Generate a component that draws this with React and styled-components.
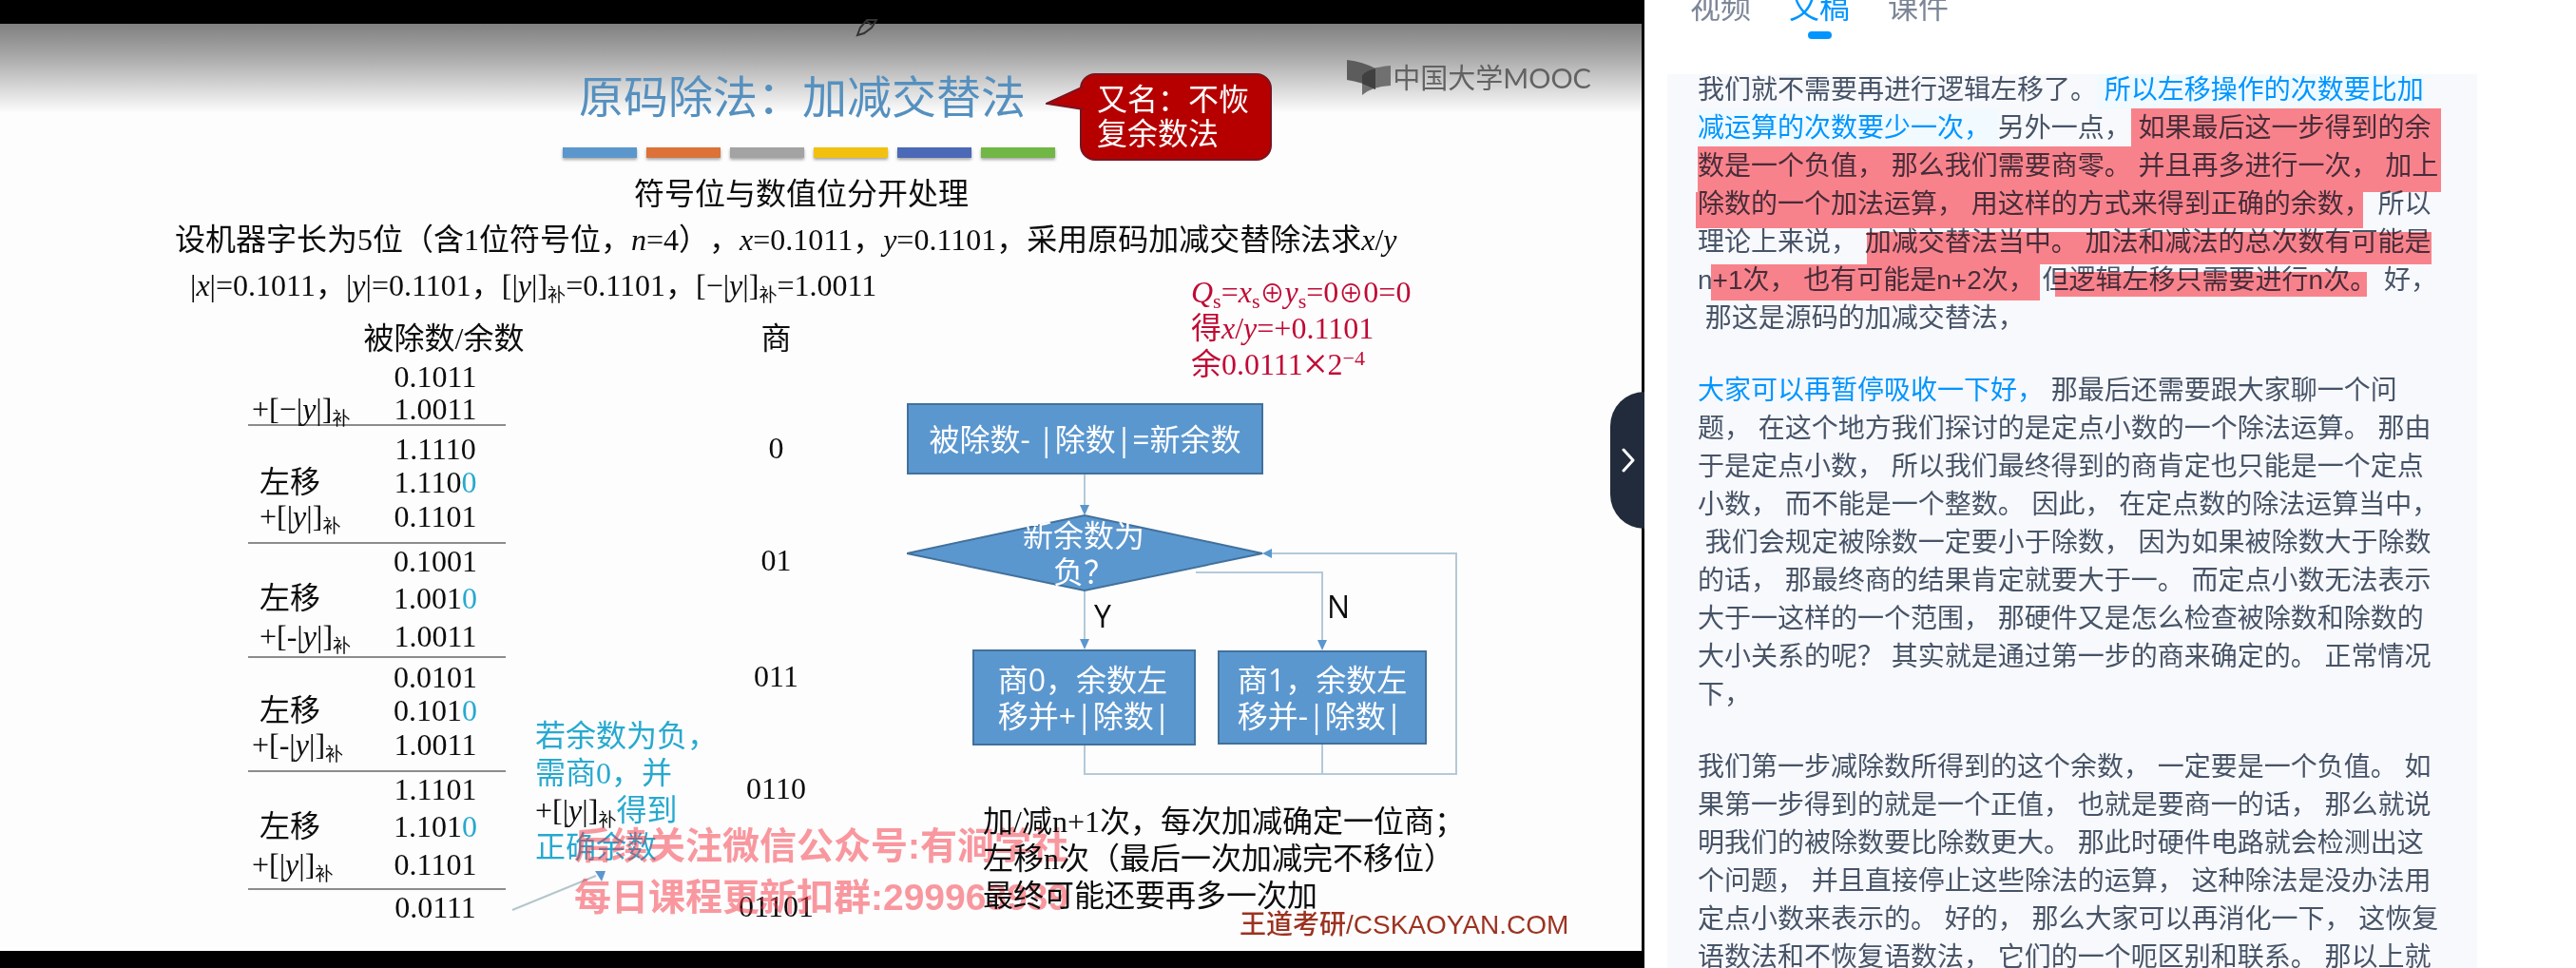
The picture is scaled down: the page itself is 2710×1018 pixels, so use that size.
import React from "react";
import styled, { createGlobalStyle } from "styled-components";

const serif = `"Liberation Serif", "Noto Sans CJK SC", serif`;
const sans = `"Liberation Sans", "Noto Sans CJK SC", sans-serif`;
const humanist = `"Open Sans", "Noto Sans CJK SC", sans-serif`;

const GlobalStyle = createGlobalStyle`
  *, *::before, *::after { box-sizing: border-box; }
  body { margin: 0; background: #fff; overflow: hidden; text-spacing-trim: space-all; }
  p, h1, h2 { margin: 0; font-weight: inherit; font-size: inherit; }
`;

const Page = styled.div`
  display: grid;
  grid-template-columns: minmax(0, 1fr) 980px;
  height: 100vh;
  overflow: hidden;
  font-family: ${sans};
`;

/* ---------- video ---------- */

const Video = styled.main`
  position: relative;
  display: flex;
  min-width: 0;
  padding: 25px 3px 18px 0;
  background: #000;
`;

const Slide = styled.section`
  position: relative;
  flex: 1;
  min-width: 0;
  padding-top: 38px;
  overflow: hidden;
  color: #0c0c0c;
  background: linear-gradient(#808080 0, #a8a8a8 34px, #d0d0d0 62px, #fdfdfd 94px);
  font-family: ${serif};
  font-size: 32px;
  font-weight: 400;
  white-space: nowrap;
`;

const SlideHeader = styled.header`
  display: flex;
  align-items: flex-start;
  gap: 26px;
  padding: 0 53px 0 592px;
`;

const TitleBlock = styled.div`
  margin-top: 16px;
`;

const Title = styled.h1`
  padding-left: 17px;
  color: #5590bf;
  font-size: 47px;
  line-height: 48px;
`;

const Bars = styled.div`
  display: flex;
  gap: 10px;
  margin-top: 28px;
`;

const Bar = styled.span`
  width: 78px;
  height: 11px;
  background: ${(p) => p.$color};
  box-shadow: 0 2px 3px rgba(0, 0, 0, 0.35);
`;

const Callout = styled.aside`
  position: relative;
  width: 202px;
  margin-top: 14px;
  padding: 8px 16px;
  border: 2px solid #7a1420;
  border-radius: 16px;
  background: #b60000;
  color: #fff;
  line-height: 36px;
`;

const CalloutTip = styled.svg`
  position: absolute;
  left: -38px;
  top: 12px;
`;

const Logo = styled.div`
  display: flex;
  align-items: center;
  gap: 2px;
  margin-left: auto;
  color: #626262;
  font-family: Lato, "Noto Sans CJK SC", sans-serif;
  font-size: 29px;
  line-height: 38px;
`;

const Intro = styled.div`
  padding-top: 11px;
  line-height: 48px;
`;

const IntroLine = styled.p`
  padding-left: ${(p) => p.$indent}px;
  line-height: 48px;
`;

const Body = styled.div`
  display: grid;
  grid-template-columns: 954px minmax(0, 1fr);
`;

const Steps = styled.table`
  margin-left: 261px;
  border-collapse: collapse;
  table-layout: fixed;
  width: 640px;
  line-height: 30px;
`;

const Row = styled.tr`
  & > * {
    height: ${(p) => p.$height + (p.$top || 0) + (p.$bottom || 0)}px;
    padding: ${(p) => p.$top || 0}px 0 ${(p) => (p.$tight ? 0 : (p.$bottom || 0) + 4)}px;
    font-weight: 400;
    vertical-align: middle;
  }
  & > :nth-child(-n + 2) {
    border-bottom: ${(p) => (p.$rule ? "2px solid #8c8c8c" : "0")};
  }
`;

const HeadLabel = styled.span`
  display: flex;
  justify-content: center;
  margin: 0 -20px 0 -6px;
`;

const Op = styled.td`
  text-align: left;
  & > span {
    padding-left: ${(p) => (p.$near ? 4 : 12)}px;
  }
`;

const Value = styled.td`
  text-align: center;
  & > span {
    padding-right: 4px;
  }
`;

const Cyan = styled.span`
  color: #27a9cf;
`;

const Sub = styled.sub`
  font-size: ${(p) => (p.$letter ? 22 : 19)}px;
  line-height: 0;
  vertical-align: -6px;
`;

const Sup = styled.sup`
  font-size: 22px;
  line-height: 0;
  vertical-align: 10px;
`;

const Big = styled.span`
  font-size: 46px;
  line-height: 0;
  vertical-align: -4px;
`;

const Ring = styled.span`
  font-size: 26px;
  line-height: 0;
`;

const Results = styled.div`
  padding: 12px 0 0 299px;
  color: #c00a35;
  line-height: 38px;
`;

const Chart = styled.div`
  position: relative;
  height: 392px;
  margin-top: 22px;
  font-family: ${humanist};
`;

const Wires = styled.svg`
  position: absolute;
  inset: 0;
`;

const Node = styled.div`
  position: absolute;
  left: ${(p) => p.$x}px;
  top: ${(p) => p.$y}px;
  width: ${(p) => p.$w}px;
  height: ${(p) => p.$h}px;
  display: flex;
  align-items: center;
  justify-content: center;
  border: ${(p) => (p.$plain ? "0" : "2px solid #41719c")};
  background: ${(p) => (p.$plain ? "none" : "#5b97cf")};
  color: ${(p) => (p.$dark ? "#0c0c0c" : "#fff")};
  line-height: 38px;
`;

const Centered = styled.span`
  text-align: center;
`;

const Conclusions = styled.div`
  position: relative;
  z-index: 2;
  padding: 29px 0 0 80px;
  line-height: 39px;
`;

const Credit = styled.p`
  padding-left: 350px;
  color: #9c3220;
  font-family: ${sans};
  font-size: 28px;
  font-weight: 500;
  line-height: 22px;
`;

const Note = styled.aside`
  position: absolute;
  left: 563px;
  top: 730px;
  color: #27a9cf;
  line-height: 39px;
`;

const Ink = styled.span`
  color: #0c0c0c;
`;

const Watermark = styled.p`
  position: absolute;
  left: 604px;
  top: 838px;
  color: rgba(245, 50, 65, 0.5);
  font-family: ${sans};
  font-size: 39px;
  font-weight: 700;
  line-height: 54px;
`;

const Pointer = styled.svg`
  position: absolute;
  left: 537px;
  top: 886px;
`;

const Pencil = styled.svg`
  position: absolute;
  left: 900px;
  top: 20px;
`;

const Collapse = styled.button`
  position: absolute;
  right: 0;
  top: 412px;
  width: 36px;
  height: 144px;
  padding: 0 10px 0 12px;
  border: 0;
  border-radius: 36px 0 0 36px;
  background: #222b3b;
  line-height: 0;
`;

/* ---------- transcript ---------- */

const Side = styled.aside`
  display: flex;
  flex-direction: column;
  min-height: 0;
  padding: 0 104px 0 24px;
  background: #fff;
`;

const Tabs = styled.nav`
  display: flex;
  gap: 40px;
  flex: none;
  height: 90px;
  margin-top: -12px;
  padding-left: 24px;
`;

const Tab = styled.button`
  display: flex;
  flex-direction: column;
  align-items: center;
  gap: 5px;
  padding: 0;
  border: 0;
  background: none;
  color: ${(p) => (p.$active ? "#0095ff" : "#7d8698")};
  font: 32px / 40px ${sans};
  &::after {
    content: "";
    width: 25px;
    height: 8px;
    border-radius: 4px;
    background: ${(p) => (p.$active ? "#0095ff" : "transparent")};
  }
`;

const Panel = styled.article`
  position: relative;
  flex: 1;
  min-height: 0;
  overflow: hidden;
  padding: 0 32px;
  background: #f8f9fd;
`;

const Script = styled.div`
  display: flex;
  flex-direction: column;
  gap: 36px;
  margin-top: -3px;
  color: #475467;
  font-size: 28px;
  line-height: 40px;
`;

const Para = styled.p`
  white-space: pre;
`;

const Spoken = styled.span`
  padding: 4px 0;
  color: #0095ff;
  background: ${(p) => (p.$lit ? "#f0faff" : "none")};
`;

const Mark = styled.span`
  position: absolute;
  left: ${(p) => p.$x}px;
  top: ${(p) => p.$y}px;
  width: ${(p) => p.$w}px;
  height: ${(p) => p.$h}px;
  background: #ff858c;
  mix-blend-mode: multiply;
`;

const barColors = ["#5b97cc", "#dc7238", "#a3a3a3", "#f2c10f", "#4b69b7", "#71b745"];

const y = <i>y</i>;
const compl = <Sub>补</Sub>;
const shift = "左移";
const plusY = <>+[|{y}|]{compl}</>;
const minusY = <>+[-|{y}|]{compl}</>;

const steps = [
  { value: "0.1011", height: 34, tight: true },
  { op: <>+[−|{y}|]{compl}</>, near: true, value: "1.0011", height: 34, tight: true, rule: true },
  { value: "1.1110", quotient: "0", height: 36, top: 8 },
  { op: shift, value: "1.110", added: "0", height: 36 },
  { op: plusY, value: "0.1101", height: 36, bottom: 8, rule: true },
  { value: "0.1001", quotient: "01", height: 40 },
  { op: shift, value: "1.001", added: "0", height: 40 },
  { op: minusY, value: "1.0011", height: 40, rule: true },
  { value: "0.0101", quotient: "011", height: 36, top: 4 },
  { op: shift, value: "0.101", added: "0", height: 36 },
  { op: minusY, near: true, value: "1.0011", height: 36, bottom: 8, rule: true },
  { value: "1.1101", quotient: "0110", height: 40 },
  { op: shift, value: "1.101", added: "0", height: 40 },
  { op: plusY, near: true, value: "0.1101", height: 40, bottom: 4, rule: true },
  { value: "0.0111", quotient: "01101", height: 40 },
];

const marks = [
  [488, 36, 326, 40],
  [32, 76, 782, 48],
  [30, 124, 702, 38],
  [210, 166, 594, 34],
  [46, 200, 346, 38],
  [408, 208, 328, 26],
];

const paraOne = [
  "另外一点， 如果最后这一步得到的余",
  "数是一个负值， 那么我们需要商零。 并且再多进行一次， 加上",
  "除数的一个加法运算， 用这样的方式来得到正确的余数， 所以",
  "理论上来说， 加减交替法当中。 加法和减法的总次数有可能是",
  "n+1次， 也有可能是n+2次， 但逻辑左移只需要进行n次。 好，",
  " 那这是源码的加减交替法，",
].join("\n");

const paraTwo = [
  " 那最后还需要跟大家聊一个问",
  "题， 在这个地方我们探讨的是定点小数的一个除法运算。 那由",
  "于是定点小数， 所以我们最终得到的商肯定也只能是一个定点",
  "小数， 而不能是一个整数。 因此， 在定点数的除法运算当中，",
  " 我们会规定被除数一定要小于除数， 因为如果被除数大于除数",
  "的话， 那最终商的结果肯定就要大于一。 而定点小数无法表示",
  "大于一这样的一个范围， 那硬件又是怎么检查被除数和除数的",
  "大小关系的呢？ 其实就是通过第一步的商来确定的。 正常情况",
  "下，",
].join("\n");

const paraThree = [
  "我们第一步减除数所得到的这个余数， 一定要是一个负值。 如",
  "果第一步得到的就是一个正值， 也就是要商一的话， 那么就说",
  "明我们的被除数要比除数更大。 那此时硬件电路就会检测出这",
  "个问题， 并且直接停止这些除法的运算， 这种除法是没办法用",
  "定点小数来表示的。 好的， 那么大家可以再消化一下， 这恢复",
  "语数法和不恢复语数法， 它们的一个呃区别和联系。 那以上就",
].join("\n");

const OpCol = styled.col`width: 127px;`;
const ValueCol = styled.col`width: 144px;`;
const GapCol = styled.col`width: 200px;`;

function DivisionTable() {
  return (
    <Steps>
      <colgroup>
        <OpCol />
        <ValueCol />
        <GapCol />
        <col />
      </colgroup>
      <thead>
        <Row $height={43} $top={12}>
          <th />
          <th><HeadLabel>被除数/余数</HeadLabel></th>
          <th />
          <th>商</th>
        </Row>
      </thead>
      <tbody>
        {steps.map((s, i) => (
          <Row key={i} $height={s.height} $top={s.top} $bottom={s.bottom} $tight={s.tight} $rule={s.rule}>
            <Op $near={s.near}><span>{s.op}</span></Op>
            <Value><span>{s.value}{s.added && <Cyan>{s.added}</Cyan>}</span></Value>
            <td />
            <Value>{s.quotient}</Value>
          </Row>
        ))}
      </tbody>
    </Steps>
  );
}

function FlowChart() {
  return (
    <Chart>
      <Wires width="600" height="394" fill="none" stroke="#b4c9d8" strokeWidth="2">
        <path d="M187 75V108M187 197V250M304 178H437V250M187 360V390H578V158H384M437 358V390" />
        <path d="M0 158L187 118L374 158L187 197Z" fill="#5b97cf" stroke="#41719c" />
        <g fill="#5b97cf" stroke="none">
          <path d="M182 107h10l-5 11zM182 248h10l-5 11zM432 249h10l-5 11zM384 153v10l-10-5z" />
        </g>
      </Wires>
      <Node $x={0} $y={0} $w={375} $h={75}>被除数- |除数|=新余数</Node>
      <Node $x={80} $y={120} $w={212} $h={76} $plain>
        <Centered>新余数为<br />负？</Centered>
      </Node>
      <Node $x={69} $y={259} $w={235} $h={101}><span>商0，余数左<br />移并+|除数|</span></Node>
      <Node $x={327} $y={260} $w={220} $h={99}><span>商1，余数左<br />移并-|除数|</span></Node>
      <Node $x={194} $y={205} $w={24} $h={38} $plain $dark>Y</Node>
      <Node $x={442} $y={195} $w={24} $h={38} $plain $dark>N</Node>
    </Chart>
  );
}

export default function App() {
  return (
    <>
      <GlobalStyle />
      <Page>
        <Video>
          <Slide>
            <SlideHeader>
              <TitleBlock>
                <Title>原码除法：加减交替法</Title>
                <Bars>{barColors.map((c) => <Bar key={c} $color={c} />)}</Bars>
              </TitleBlock>
              <Callout>
                <CalloutTip width="40" height="28" viewBox="0 0 40 28">
                  <path d="M40 0L1 18L40 24" fill="#b60000" stroke="#7a1420" strokeWidth="2" />
                </CalloutTip>
                又名：不恢<br />复余数法
              </Callout>
              <Logo>
                <svg width="46" height="38" viewBox="0 0 46 38">
                  <path d="M0 0Q17 2 30 9V31Q16 23 0 21Z" fill="#5c5c5c" />
                  <path d="M16 16Q22 8 46 6V27Q26 28 16 37Z" fill="#707070" />
                  <path d="M16 16Q20 11 30 9V31L16 25Z" fill="#404040" />
                </svg>
                <span>中国大学MOOC</span>
              </Logo>
            </SlideHeader>

            <Intro>
              <IntroLine $indent={667}>符号位与数值位分开处理</IntroLine>
              <IntroLine $indent={184}>
                设机器字长为5位（含1位符号位，<i>n</i>=4），<i>x</i>=0.1011，{y}=0.1101，采用原码加减交替除法求<i>x</i>/{y}
              </IntroLine>
            </Intro>

            <Body>
              <div>
                <IntroLine $indent={200}>
                  |<i>x</i>|=0.1011，|{y}|=0.1101，[|{y}|]{compl}=0.1101，[−|{y}|]{compl}=1.0011
                </IntroLine>
                <DivisionTable />
              </div>
              <div>
                <Results>
                  <p><i>Q</i><Sub $letter>s</Sub>=<i>x</i><Sub $letter>s</Sub><Ring>⊕</Ring>{y}<Sub $letter>s</Sub>=0<Ring>⊕</Ring>0=0</p>
                  <p>得<i>x</i>/{y}=+0.1101</p>
                  <p>余0.0111<Big>×</Big>2<Sup>−4</Sup></p>
                </Results>
                <FlowChart />
                <Conclusions>
                  <p>加/减n+1次，每次加减确定一位商；</p>
                  <p>左移n次（最后一次加减完不移位）</p>
                  <p>最终可能还要再多一次加</p>
                </Conclusions>
                <Credit>王道考研/CSKAOYAN.COM</Credit>
              </div>
            </Body>

            <Pointer width="110" height="48">
              <path d="M2 46L90 10" stroke="#b4c6cc" strokeWidth="2" />
              <path d="M89 5h11l-4 11z" fill="#5b97cf" />
            </Pointer>
            <Note>
              若余数为负，<br />需商0，并<br /><Ink>{plusY}</Ink>得到<br />正确余数
            </Note>
            <Watermark>
              后续关注微信公众号:有涧学社<br />每日课程更新扣群:299963939
            </Watermark>
          </Slide>
          <Pencil width="24" height="20" viewBox="0 0 24 20" fill="none" stroke="#333" strokeWidth="2">
            <path d="M2 17L5 9L12 1H22L17 9L9 15ZM11 2L17 6" />
          </Pencil>
          <Collapse aria-label="收起">
            <svg width="14" height="26" viewBox="0 0 14 26" fill="none" stroke="#fff" strokeWidth="3" strokeLinecap="round" strokeLinejoin="round">
              <path d="M2 2L12 13L2 24" />
            </svg>
          </Collapse>
        </Video>

        <Side>
          <Tabs>
            <Tab>视频</Tab>
            <Tab $active>文稿</Tab>
            <Tab>课件</Tab>
          </Tabs>
          <Panel>
            <Script>
              <Para>
                我们就不需要再进行逻辑左移了。
                <Spoken $lit>{" 所以左移操作的次数要比加\n减运算的次数要少一次， "}</Spoken>
                {paraOne}
              </Para>
              <Para><Spoken>大家可以再暂停吸收一下好，</Spoken>{paraTwo}</Para>
              <Para>{paraThree}</Para>
            </Script>
            {marks.map(([x, top, w, h]) => <Mark key={top} $x={x} $y={top} $w={w} $h={h} />)}
          </Panel>
        </Side>
      </Page>
    </>
  );
}
